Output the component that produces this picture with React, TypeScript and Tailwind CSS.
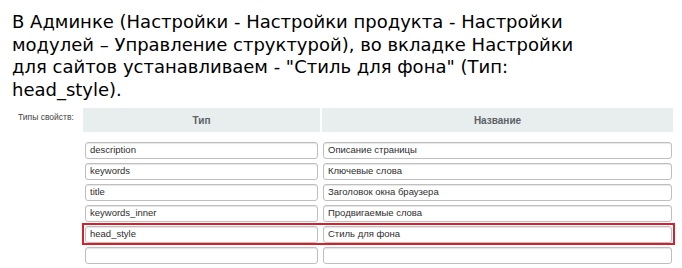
import {FC} from "react";

const rows: Array<{type: string, name: string, marked?: boolean}> = [
    {type: "description", name: "Описание страницы"},
    {type: "keywords", name: "Ключевые слова"},
    {type: "title", name: "Заголовок окна браузера"},
    {type: "keywords_inner", name: "Продвигаемые слова"},
    {type: "head_style", name: "Стиль для фона", marked: true},
    {type: "", name: ""},
];

const Field: FC<{value: string, className?: string}> = ({value, className}) => (
    <div className={"h-[17px] flex items-center px-[4px] bg-white border border-[#bfbfbf] rounded-[3px] shadow-[inset_0_1px_1px_rgba(0,0,0,0.1)] text-[9.5px] text-[#2e2e2e] " + (className ?? "")}>
        {value}
    </div>
);

export default function App() {
    return (
        <div className="w-[682px] h-[268px] bg-white overflow-hidden">
            {/* текст инструкции */}
            <p className="pl-[12px] pt-[11px] text-[18px] leading-[22.5px] text-black whitespace-nowrap font-['DejaVu_Sans',sans-serif]">
                В Админке (Настройки - Настройки продукта - Настройки<br/>
                модулей – Управление структурой), во вкладке Настройки<br/>
                для сайтов устанавливаем - "Стиль для фона" (Тип:<br/>
                head_style).
            </p>

            {/* скриншот админки */}
            <div className="flex mt-[7px] font-['Liberation_Sans',Arial,sans-serif]">
                <div className="w-[83px] pl-[18px] pt-[3px] text-[8.5px] text-[#444]">Типы свойств:</div>
                <div className="w-[590px]">
                    <div className="grid grid-cols-[237px_351px] gap-x-[2px] h-[24px]">
                        <div className="bg-[#e8eded] flex items-center justify-center text-[10px] font-bold text-[#5b6266]">Тип</div>
                        <div className="bg-[#e8eded] flex items-center justify-center text-[10px] font-bold text-[#5b6266]">Название</div>
                    </div>
                    <div className="mt-[10px] flex flex-col gap-[4px]">
                        {rows.map((row, index) => (
                            <div key={index} className="relative grid grid-cols-[237px_351px] gap-x-[2px]">
                                <Field value={row.type} className="mx-[2px]" />
                                <Field value={row.name} className="ml-[1px] mr-[1px]" />
                                {row.marked && (
                                    <div className="absolute left-[-1px] right-[-2px] top-[-3px] bottom-[-2px] border-2 border-[#d8202c]" />
                                )}
                            </div>
                        ))}
                    </div>
                </div>
            </div>
        </div>
    )
}
